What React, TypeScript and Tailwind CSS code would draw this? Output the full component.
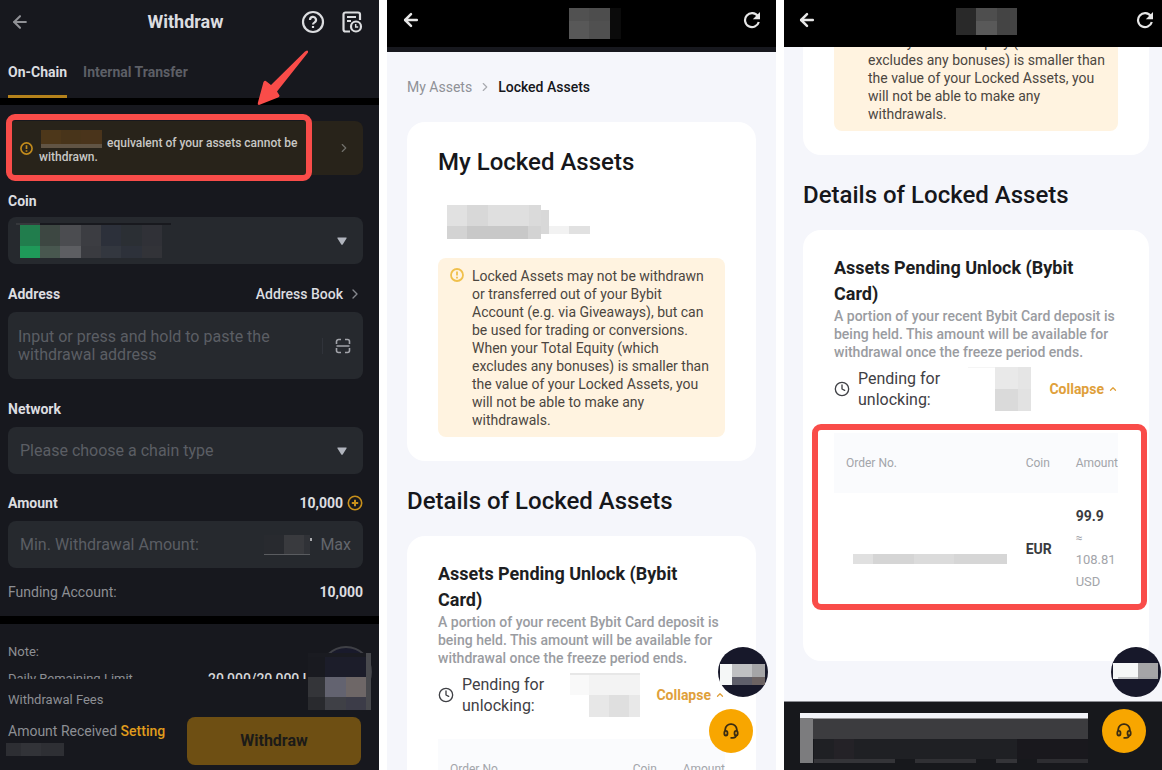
import React, { useState } from 'react';
import { ArrowLeft, ChevronRight, ChevronUp, Clock } from 'lucide-react';

type Block = [x: number, y: number, w: number, h: number, color: string];

/* Pixelated blocks that hide private values */
const Mosaic: React.FC<{ width: number; height: number; blocks: Block[]; className?: string }> = ({
  width,
  height,
  blocks,
  className = '',
}) => (
  <svg
    width={width}
    height={height}
    viewBox={`0 0 ${width} ${height}`}
    shapeRendering="crispEdges"
    aria-hidden="true"
    className={`shrink-0 ${className}`}
  >
    {blocks.map(([x, y, w, h, color], i) => (
      <rect key={i} x={x} y={y} width={w} height={h} fill={color} />
    ))}
  </svg>
);

const AlertCircle: React.FC<{ size: number; className?: string }> = ({ size, className = '' }) => (
  <svg width={size} height={size} viewBox="0 0 14 14" fill="none" stroke="currentColor" className={`shrink-0 ${className}`}>
    <circle cx="7" cy="7" r="6" strokeWidth="1.8" />
    <path d="M7 3.6v4M7 8.8v1.6" strokeWidth="1.8" />
  </svg>
);

const HelpIcon: React.FC = () => (
  <svg width="24" height="24" viewBox="0 0 24 24" fill="none" stroke="currentColor" strokeWidth="2.2">
    <circle cx="12" cy="12" r="10" />
    <path d="M9 10a3 3 0 1 1 4.6 2.4c-1 .6-1.600 1-1.600 2M12 16v2" />
  </svg>
);

const HistoryIcon: React.FC = () => (
  <svg width="22" height="24" viewBox="0 0 22 24" fill="none" stroke="currentColor" strokeWidth="2.2">
    <path d="M19 10V4.500a2 2 0 0 0-2-2H4.500a2 2 0 0 0-2 2V19.500a2 2 0 0 0 2 2H9" />
    <path d="M6 7h9M6 11h4" />
    <circle cx="15" cy="16.500" r="5" />
    <path d="M14.700 14v3h2.500" strokeWidth="1.500" />
  </svg>
);

const ScanIcon: React.FC = () => (
  <svg width="16" height="16" viewBox="0 0 16 16" fill="none" stroke="currentColor" strokeWidth="1.600">
    <path d="M1.500 6V3.500a2 2 0 0 1 2-2H6M10 1.500h2.500a2 2 0 0 1 2 2V6M14.500 10v2.500a2 2 0 0 1-2 2H10M6 14.500H3.500a2 2 0 0 1-2-2V10M1.500 8h13" />
  </svg>
);

const PlusCircle: React.FC = () => (
  <svg width="16" height="16" viewBox="0 0 16 16" fill="none" stroke="currentColor" strokeWidth="1.600">
    <circle cx="8" cy="8" r="6.700" />
    <path d="M8 4.800v6.400M4.800 8h6.400" strokeWidth="2" />
  </svg>
);

const RefreshIcon: React.FC = () => (
  <svg width="18" height="18" viewBox="0 0 18 18" fill="none">
    <path d="M14.800 5.200A7 7 0 1 0 15.800 11" stroke="currentColor" strokeWidth="2.200" />
    <path d="M17 1v7.200H9.800Z" fill="currentColor" />
  </svg>
);

const HeadsetIcon: React.FC = () => (
  <svg width="16" height="16" viewBox="0 0 16 16" fill="none" stroke="currentColor" strokeWidth="1.800">
    <path d="M2.200 8V6.500A5.500 5.500 0 0 1 8 1.200a5.500 5.500 0 0 1 5.800 5.300V8" />
    <ellipse cx="2.900" cy="10.200" rx="1.600" ry="2.300" />
    <ellipse cx="13.100" cy="10.200" rx="1.600" ry="2.300" />
    <path d="M13.200 12.500c-.4 1.600-1.600 2.300-3.200 2.300H7.500" />
  </svg>
);

const Caret: React.FC = () => (
  <svg width="10" height="9" viewBox="0 0 10 9" aria-hidden="true" className="pointer-events-none absolute right-4 top-5">
    <path d="M.800.500h8.400a.500.500 0 0 1 .400.800L5.700 7.400a.800.800 0 0 1-1.400 0L.400 1.300A.500.500 0 0 1 .800.500Z" fill="#b0b4bd" />
  </svg>
);

const Withdraw: React.FC = () => {
  const [tab, setTab] = useState('On-Chain');

  return (
    <section className="relative flex flex-col min-h-0 overflow-hidden bg-[#17181e] text-[#dcdde0]">
      {/* Header */}
      <header className="relative shrink-0 h-11 flex items-center justify-between pl-2.5 pr-4">
        <button aria-label="Back" className="text-[#909196]">
          <ArrowLeft size={20} strokeWidth={2.5} />
        </button>
        <h1 className="absolute inset-x-0 text-center text-lg font-bold pointer-events-none pr-2">Withdraw</h1>
        <div className="flex items-center gap-4">
          <button aria-label="Help"><HelpIcon /></button>
          <button aria-label="History"><HistoryIcon /></button>
        </div>
      </header>

      {/* Tabs */}
      <nav className="shrink-0 flex gap-4 px-2 h-[54px]">
        {['On-Chain', 'Internal Transfer'].map((name) => (
          <button
            key={name}
            onClick={() => setTab(name)}
            className={`pt-1 text-sm border-b-[3px] font-bold ${
              tab === name ? 'border-[#b5821b] text-[#dcdde0]' : 'border-transparent text-[#5d5f66]'
            }`}
          >
            {name}
          </button>
        ))}
      </nav>
      <div className="shrink-0 h-[7px] bg-black" />

      {/* Form */}
      <div className="flex-1 min-h-0 overflow-hidden">
        <div className="pl-2 pr-4">
          <div className="relative mt-4 h-[54px] rounded-lg bg-[#28231a] flex items-center pl-3 pr-3">
            <AlertCircle size={13} className="text-[#c18a1c]" />
            <p className="flex-1 pt-1 ml-1.5 text-xs leading-[14px] font-medium text-[#c9c8c5]">
              <Mosaic
                width={65}
                height={20}
                className="inline-block -mt-2"
                blocks={[
                  [2, 0, 20, 14, '#4d371a'],
                  [22, 0, 20, 14, '#48341a'],
                  [42, 0, 21, 14, '#4a341b'],
                  [2, 14, 61, 4, '#615444'],
                ]}
              />{' '}
              equivalent of your assets cannot be
              <br />
              withdrawn.
            </p>
            <ChevronRight size={14} className="text-[#71706b]" />
            {/* Highlight */}
            <div className="absolute -left-0.5 -top-[7px] -bottom-1.5 right-[51px] rounded-[9px] border-[6px] border-[#f94c49]" />
          </div>

          <label htmlFor="coin" className="block mt-4 text-sm leading-5 font-bold">Coin</label>
          <div className="relative mt-1.5 h-[47px]">
            <select id="coin" className="appearance-none w-full h-full rounded-lg bg-[#26292e]">
              <option value="" />
            </select>
            <Mosaic
              width={155}
              height={36}
              className="absolute left-2 top-1.5 pointer-events-none"
              blocks={[
                [0, 0, 155, 2, '#18191e'],
                [0, 0, 24, 2, '#36383c'],
                [4, 2, 20, 21, '#217d4d'],
                [24, 2, 20, 21, '#3d4742'],
                [44, 2, 21, 21, '#4b4c50'],
                [65, 2, 20, 21, '#3c3d42'],
                [85, 2, 20, 21, '#2c303a'],
                [105, 2, 21, 21, '#2b2f34'],
                [126, 2, 20, 21, '#303137'],
                [4, 23, 20, 12, '#1f9959'],
                [24, 23, 20, 12, '#48574f'],
                [44, 23, 21, 12, '#5d5e62'],
                [65, 23, 20, 12, '#3a3b40'],
                [85, 23, 20, 12, '#33373f'],
                [105, 23, 21, 12, '#2d313a'],
                [126, 23, 20, 12, '#323338'],
              ]}
            />
            <Caret />
          </div>

          <div className="mt-5 flex items-center justify-between text-sm leading-5">
            <label htmlFor="address" className="font-bold">Address</label>
            <a href="#address-book" className="flex items-center gap-1 font-medium">
              Address Book <ChevronRight size={16} className="text-[#85878d]" />
            </a>
          </div>
          <div className="mt-2 h-[67px] flex items-center rounded-lg bg-[#26292e] pl-2.5 pr-3">
            <textarea
              id="address"
              rows={2}
              placeholder="Input or press and hold to paste the withdrawal address"
              className="flex-1 min-w-0 mr-6 resize-none overflow-hidden text-base leading-[18px] placeholder:text-[#5b5e64] outline-none"
            />
            <div className="h-4 w-px mr-3 bg-[#30333a]" />
            <button aria-label="Scan" className="text-[#a2a4aa]"><ScanIcon /></button>
          </div>

          <label htmlFor="network" className="block mt-5 text-sm leading-5 font-bold">Network</label>
          <div className="relative mt-2 h-[47px]">
            <select id="network" className="appearance-none w-full h-full rounded-lg bg-[#26292e] px-3 text-base text-[#5b5e64]">
              <option>Please choose a chain type</option>
            </select>
            <Caret />
          </div>

          <div className="mt-[19px] flex items-center justify-between text-sm leading-5 font-bold">
            <label htmlFor="amount">Amount</label>
            <span className="flex items-center gap-1">
              10,000
              <button aria-label="Add funds" className="text-[#c8901b]"><PlusCircle /></button>
            </span>
          </div>
          <div className="mt-2 h-[47px] flex items-center rounded-lg bg-[#26292e] px-3">
            <input
              id="amount"
              placeholder="Min. Withdrawal Amount:"
              className="flex-1 min-w-0 text-base placeholder:text-[#5b5e64] outline-none"
            />
            <Mosaic
              width={50}
              height={20}
              className="mr-2"
              blocks={[
                [2, 0, 20, 19, '#282a2f'],
                [22, 0, 20, 19, '#393a3e'],
                [42, 0, 6, 19, '#303237'],
                [2, 19, 46, 1, '#5a5c60'],
                [48, 3, 2, 3, '#a9aaad'],
              ]}
            />
            <button className="text-base text-[#63666c]">Max</button>
          </div>

          <div className="mt-3.5 flex justify-between text-sm leading-5">
            <span className="text-[#8d8f94]">Funding Account:</span>
            <span className="font-bold">10,000</span>
          </div>
        </div>

        <div className="mt-3.5 h-2 bg-black" />

        <div className="px-2 text-[13px] leading-5 text-[#8d8f94]">
          <p className="mt-[18px]">Note:</p>
          <div className="mt-[7px] flex">
            <span className="w-[200px]">Daily Remaining Limit</span>
            <span className="text-sm font-medium text-[#d5d6d9]">20,000/20,000 USDT</span>
          </div>
        </div>
      </div>

      {/* Footer */}
      <footer className="shrink-0 h-[91px] pl-2 pr-[18px] pt-[11px]">
        <p className="text-[13px] leading-5 text-[#8d8f94]">Withdrawal Fees</p>
        <div className="mt-[7px] flex justify-between">
          <div className="pt-1 text-sm leading-5 text-[#8d8f94]">
            <p>
              Amount Received <a href="#setting" className="font-medium text-[#e09c1c]">Setting</a>
            </p>
            <Mosaic
              width={58}
              height={13}
              className="mt-0.5 -ml-0.5"
              blocks={[
                [0, 0, 15, 13, '#2d2e33'],
                [15, 0, 20, 13, '#323338'],
                [35, 0, 23, 13, '#2e2f34'],
              ]}
            />
          </div>
          <button className="w-[174px] h-12 rounded-lg bg-[#6e4f13] text-base font-bold text-[#1c1b18]">Withdraw</button>
        </div>
      </footer>

      {/* Floating widget */}
      <svg width="66" height="66" viewBox="0 0 66 66" className="absolute right-1.5 bottom-[59px]" aria-hidden="true">
        <circle cx="39" cy="27" r="25" fill="#191a2b" stroke="#3f4046" strokeWidth="2" />
        <g shapeRendering="crispEdges">
          <rect x="1" y="8" width="63" height="57" fill="#1b1c25" />
          <rect x="1" y="8" width="17" height="24" fill="#191a20" />
          <rect x="1" y="8" width="63" height="4" fill="#1a1b21" />
          <rect x="18" y="12" width="41" height="20" fill="#1c1d2a" />
          <rect x="1" y="32" width="17" height="20" fill="#343539" />
          <rect x="18" y="32" width="21" height="20" fill="#636370" />
          <rect x="39" y="32" width="20" height="20" fill="#6e6767" />
          <rect x="1" y="52" width="17" height="13" fill="#292a2e" />
          <rect x="18" y="52" width="21" height="13" fill="#3f4046" />
          <rect x="39" y="52" width="20" height="13" fill="#3c3c48" />
          <rect x="59" y="8" width="5" height="57" fill="#48494d" />
        </g>
      </svg>

      {/* Pointer arrow */}
      <svg width="52" height="56" viewBox="0 0 52 56" className="absolute right-[70px] top-[50px]" aria-hidden="true">
        <path d="M50 .500Q51.500.500 51 2.500L20 41.500 22.500 45.500Q22.500 47 21 47.500L2 55Q.300 55 .800 53L6.500 32Q8 30 9.500 31.500L14 35 48 1.500Z" fill="#f94c49" />
      </svg>
    </section>
  );
};

const TopBar: React.FC<{ blocks: Block[]; className: string; mosaicClassName: string }> = ({
  blocks,
  className,
  mosaicClassName,
}) => (
  <header className={`shrink-0 h-[47px] flex items-center justify-between bg-black text-[#e6e6e6] pb-[7px] ${className}`}>
    <button aria-label="Back"><ArrowLeft size={20} strokeWidth={3} /></button>
    <Mosaic width={62} height={31} blocks={blocks} className={`mt-1.5 ${mosaicClassName}`} />
    <button aria-label="Reload"><RefreshIcon /></button>
  </header>
);

const NoticeBox: React.FC = () => (
  <div className="flex rounded-lg bg-[#fff3e0] pt-[9px] pb-2 pl-3 pr-3 text-sm leading-[18px] text-[#4b4640] whitespace-nowrap">
    <AlertCircle size={14} className="mt-px mr-2 text-[#f0c04c]" />
    <p>
      Locked Assets may not be withdrawn<br />
      or transferred out of your Bybit<br />
      Account (e.g. via Giveaways), but can<br />
      be used for trading or conversions.<br />
      When your Total Equity (which<br />
      excludes any bonuses) is smaller than<br />
      the value of your Locked Assets, you<br />
      will not be able to make any<br />
      withdrawals.
    </p>
  </div>
);

const PendingCard: React.FC<{ blocks: Block[] }> = ({ blocks }) => (
  <div className="shrink-0 rounded-[18px] bg-white px-[31px] pt-[25px] pb-14">
    <h3 className="text-lg leading-[26px] font-bold text-[#1d1e22]">
      Assets Pending Unlock (Bybit<br />Card)
    </h3>
    <p className="text-sm leading-[18px] font-medium text-[#9a9ca1] whitespace-nowrap">
      A portion of your recent Bybit Card deposit is<br />
      being held. This amount will be available for<br />
      withdrawal once the freeze period ends.
    </p>
    <div className="mt-1.5 h-11 flex items-center">
      <Clock size={16} className="shrink-0 mr-2 text-[#3f4045]" />
      <span className="text-base leading-[21px] text-[#3f4045]">
        Pending for<br />unlocking:
      </span>
      <Mosaic width={70} height={44} blocks={blocks} className="ml-auto mr-4" />
      <button className="flex items-center gap-1 text-sm font-bold text-[#e0a03a]">
        Collapse <ChevronUp size={10} strokeWidth={3} />
      </button>
    </div>

    <table className="mt-[22px] w-full text-left">
      <thead className="bg-[#fafbfd] text-xs text-[#a3a5aa]">
        <tr className="h-[60px]">
          <th className="pl-3 font-normal">Order No.</th>
          <th className="w-[50px] font-normal">Coin</th>
          <th className="w-[42px] font-normal">Amount</th>
        </tr>
      </thead>
      <tbody>
        <tr>
          <td className="pl-[19px] pt-5">
            <Mosaic
              width={154}
              height={10}
              blocks={[
                [0, 0, 20, 10, '#e0e0e0'],
                [20, 0, 41, 10, '#d5d5d5'],
                [61, 0, 40, 10, '#dbdbdb'],
                [101, 0, 53, 10, '#d6d6d6'],
              ]}
            />
          </td>
          <td className="text-sm font-bold text-[#3a3b40]">EUR</td>
          <td className="py-3 text-[13px] leading-[22px] text-[#a3a5aa]">
            <b className="block text-sm leading-[22px] text-[#3a3b40]">99.9</b>
            <span className="block text-xs leading-[22px]">≈</span>
            108.81<br />USD
          </td>
        </tr>
      </tbody>
    </table>
  </div>
);

const SupportButton: React.FC<{ className: string }> = ({ className }) => (
  <button
    aria-label="Support"
    className={`absolute size-11 flex items-center justify-center rounded-full bg-[#f8a600] text-[#3b2c12] ${className}`}
  >
    <HeadsetIcon />
  </button>
);

const LockedAssets: React.FC = () => (
  <section className="relative flex flex-col min-h-0 overflow-hidden bg-[#f5f6fb] text-[#16171b]">
    <TopBar
      className="pl-3.5 pr-[15px]"
      mosaicClassName="ml-4"
      blocks={[
        [10, 0, 20, 13, '#515151'],
        [30, 0, 21, 13, '#4d4d4d'],
        [10, 13, 20, 18, '#585858'],
        [30, 13, 21, 18, '#505050'],
        [51, 0, 11, 31, '#0b0b0b'],
      ]}
    />
    <div className="shrink-0 h-[5px] bg-[#17181e]" />
    <div className="flex-1 min-h-0 overflow-hidden flex flex-col px-5">
      <nav className="mt-[25px] flex items-center text-sm leading-5 font-medium shrink-0">
        <a href="#assets" className="font-normal text-[#8f9197]">My Assets</a>
        <ChevronRight size={14} className="mx-1.5 text-[#a9abb0]" />
        <span>Locked Assets</span>
      </nav>

      <div className="mt-[25px] shrink-0 rounded-[18px] bg-white pt-6 pb-6 px-[31px]">
        <h2 className="text-2xl leading-8 font-medium">My Locked Assets</h2>
        <Mosaic
          width={143}
          height={34}
          className="mt-[27px] mb-[19px] ml-[9px]"
          blocks={[
            [0, 0, 20, 21, '#e1e1e1'],
            [20, 0, 21, 21, '#d8d8d8'],
            [41, 0, 41, 21, '#dfdfdf'],
            [82, 0, 12, 21, '#dadada'],
            [0, 21, 20, 13, '#d3d3d3'],
            [20, 21, 61, 13, '#c8c8c8'],
            [81, 21, 13, 13, '#d3d3d3'],
            [94, 5, 8, 24, '#d8d8d8'],
            [102, 21, 20, 8, '#f2f2f2'],
            [122, 21, 21, 8, '#e1e1e1'],
          ]}
        />
        <NoticeBox />
      </div>

      <h2 className="mt-6 mb-[19px] shrink-0 text-2xl leading-8 font-medium">Details of Locked Assets</h2>
      <PendingCard
        blocks={[
          [0, 0, 70, 2, '#e7e7e7'],
          [0, 2, 19, 20, '#f9f9f9'],
          [19, 2, 51, 20, '#f3f3f3'],
          [19, 22, 20, 22, '#e7e7e7'],
          [39, 22, 20, 22, '#dfdfdf'],
          [59, 22, 11, 22, '#e8e8e8'],
        ]}
      />
    </div>

    <svg width="50" height="50" viewBox="0 0 50 50" className="absolute right-2 bottom-[73px]" aria-hidden="true">
      <circle cx="25" cy="25" r="25" fill="#17182a" />
      <g shapeRendering="crispEdges">
        <rect x="2" y="17" width="12" height="21" fill="#f5f7f7" />
        <rect x="14" y="17" width="20" height="13" fill="#bfc0c2" />
        <rect x="34" y="17" width="13" height="13" fill="#a5a5a7" />
        <rect x="14" y="30" width="20" height="8" fill="#5f5f6b" />
        <rect x="34" y="30" width="13" height="8" fill="#6c6363" />
      </g>
    </svg>
    <SupportButton className="right-[23px] bottom-[17px]" />
  </section>
);

const LockedAssetsDetails: React.FC = () => (
  <section className="relative flex flex-col min-h-0 overflow-hidden bg-[#f5f6fb] text-[#16171b]">
    <TopBar
      className="pl-[13px] pr-2"
      mosaicClassName="ml-5"
      blocks={[
        [0, 0, 20, 27, '#292929'],
        [20, 0, 21, 13, '#4e4e4e'],
        [20, 13, 21, 14, '#595959'],
        [41, 0, 20, 27, '#444444'],
      ]}
    />
    <div className="flex-1 min-h-0 overflow-hidden flex flex-col pl-[19px] pr-[13px]">
      {/* Tail of the scrolled summary card */}
      <div className="shrink-0 h-[108px] flex flex-col justify-end overflow-hidden rounded-b-[18px] bg-white pb-6 px-[31px]">
        <NoticeBox />
      </div>
      <h2 className="mt-6 mb-[19px] shrink-0 text-2xl leading-8 font-medium">Details of Locked Assets</h2>
      <div className="relative shrink-0">
        <PendingCard
          blocks={[
            [5, 0, 29, 1, '#f5f5f5'],
            [32, 0, 23, 22, '#e9e9e9'],
            [55, 0, 13, 22, '#e5e5e5'],
            [32, 22, 23, 22, '#dadada'],
            [55, 22, 13, 22, '#e2e2e2'],
          ]}
        />
        {/* Highlight */}
        <div className="absolute left-[9px] right-0.5 top-[194px] h-[186px] rounded-[9px] border-[6px] border-[#f94c49]" />
      </div>
    </div>

    <footer className="shrink-0 h-[69px] bg-[#17181c] border-t border-[#8b8c92] pl-4 pt-[11px] pr-[74px]">
      <svg viewBox="0 0 288 50" preserveAspectRatio="none" shapeRendering="crispEdges" aria-hidden="true" className="block w-full h-[50px]">
        <rect width="288" height="5" fill="#f3f4f9" />
        <rect y="5" width="288" height="1" fill="#9a9a9d" />
        <rect y="6" width="288" height="20" fill="#3c3c3f" />
        <rect x="14" y="26" width="203" height="20" fill="#1f2024" />
        <rect x="34" y="26" width="20" height="20" fill="#242227" />
        <rect x="217" y="26" width="71" height="20" fill="#19181d" />
        <rect x="14" y="46" width="81" height="4" fill="#343438" />
        <rect x="115" y="46" width="61" height="4" fill="#303034" />
        <rect x="196" y="46" width="21" height="4" fill="#343438" />
        <rect x="237" y="46" width="51" height="4" fill="#2d2d31" />
        <rect y="5" width="13" height="45" fill="#7c7c7e" />
      </svg>
    </footer>

    <svg width="50" height="50" viewBox="0 0 50 50" className="absolute right-px bottom-[73px]" aria-hidden="true">
      <circle cx="25" cy="25" r="25" fill="#17182a" />
      <g shapeRendering="crispEdges">
        <rect x="2" y="16" width="25" height="16" fill="#f5f7f7" />
        <rect x="27" y="16" width="20" height="16" fill="#a5a5a7" />
        <rect x="7" y="30" width="40" height="2" fill="#9a9b9d" fillOpacity="0.5" />
      </g>
    </svg>
    <SupportButton className="right-4 bottom-[17px]" />
  </section>
);

const App: React.FC = () => {
  return (
    <main className="h-screen grid grid-cols-[379fr_389fr_378fr] grid-rows-[minmax(0,1fr)] gap-2 bg-white font-['Roboto',sans-serif]">
      <Withdraw />
      <LockedAssets />
      <LockedAssetsDetails />
    </main>
  );
};

export default App;
